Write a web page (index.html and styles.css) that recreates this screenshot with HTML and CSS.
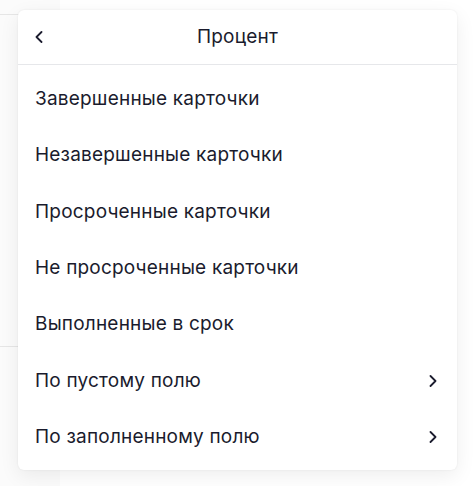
FILE: index.html
```html
<!DOCTYPE html>
<html lang="ru">
<head>
<meta charset="utf-8">
<link rel="stylesheet" href="styles.css">
</head>
<body>
<div class="backdrop">
  <div class="bg-line bg-line-top"></div>
  <div class="bg-line bg-line-bottom"></div>
</div>
<div class="menu">
  <div class="menu-header">
    <button class="back" aria-label="Назад">
      <svg width="8" height="12" viewBox="0 0 8 12"><path d="M6.5 1 L1.5 6 L6.5 11" fill="none" stroke="#1b1c2e" stroke-width="1.8" stroke-linecap="round" stroke-linejoin="round"/></svg>
    </button>
    <div class="title">Процент</div>
  </div>
  <ul class="items">
    <li class="item">Завершенные карточки</li>
    <li class="item">Незавершенные карточки</li>
    <li class="item">Просроченные карточки</li>
    <li class="item">Не просроченные карточки</li>
    <li class="item">Выполненные в срок</li>
    <li class="item">По пустому полю
      <svg class="chev" width="8" height="12" viewBox="0 0 8 12"><path d="M1.5 1 L6.5 6 L1.5 11" fill="none" stroke="#1b1c2e" stroke-width="1.8" stroke-linecap="round" stroke-linejoin="round"/></svg>
    </li>
    <li class="item">По заполненному полю
      <svg class="chev" width="8" height="12" viewBox="0 0 8 12"><path d="M1.5 1 L6.5 6 L1.5 11" fill="none" stroke="#1b1c2e" stroke-width="1.8" stroke-linecap="round" stroke-linejoin="round"/></svg>
    </li>
  </ul>
</div>
</body>
</html>
```

FILE: styles.css
```css
* { box-sizing: border-box; }
html, body {
  margin: 0;
  padding: 0;
  background: #ffffff;
  width: 476px;
  height: 486px;
  overflow: hidden;
  font-family: "Inter", "Noto Sans", sans-serif;
  color: #1a1b2d;
}
.backdrop {
  position: absolute;
  left: 0;
  top: 0;
  width: 60px;
  height: 486px;
  background: #fbfbfb;
}
.bg-line {
  position: absolute;
  left: 0;
  width: 60px;
  height: 1px;
  background: #e6e6e6;
}
.bg-line-top { top: 14px; }
.bg-line-bottom { top: 346px; }
.menu {
  position: relative;
  margin: 10px 0 0 18px;
  width: 439px;
  height: 460px;
  background: #ffffff;
  border-radius: 6px;
  box-shadow: 0 6px 20px rgba(0, 0, 0, 0.07), 0 0 2px rgba(0, 0, 0, 0.08);
  display: flex;
  flex-direction: column;
}
.menu-header {
  height: 55px;
  border-bottom: 1px solid #e6e7ea;
  display: flex;
  align-items: center;
  position: relative;
  padding-left: 17px;
}
.back {
  border: 0;
  background: none;
  padding: 0;
  width: 8px;
  height: 12px;
  display: flex;
  position: relative;
  z-index: 1;
}
.title {
  position: absolute;
  left: 0;
  right: 0;
  text-align: center;
  font-size: 19px;
  letter-spacing: 0.2px;
  line-height: 22px;
}
.items {
  list-style: none;
  margin: 0;
  padding: 6px 0 0 0;
}
.item {
  height: 56.3px;
  display: flex;
  align-items: center;
  justify-content: space-between;
  padding: 0 20px 0 17px;
  font-size: 19px;
  letter-spacing: 0.2px;
  line-height: 22px;
}
.chev { flex: none; }
```
